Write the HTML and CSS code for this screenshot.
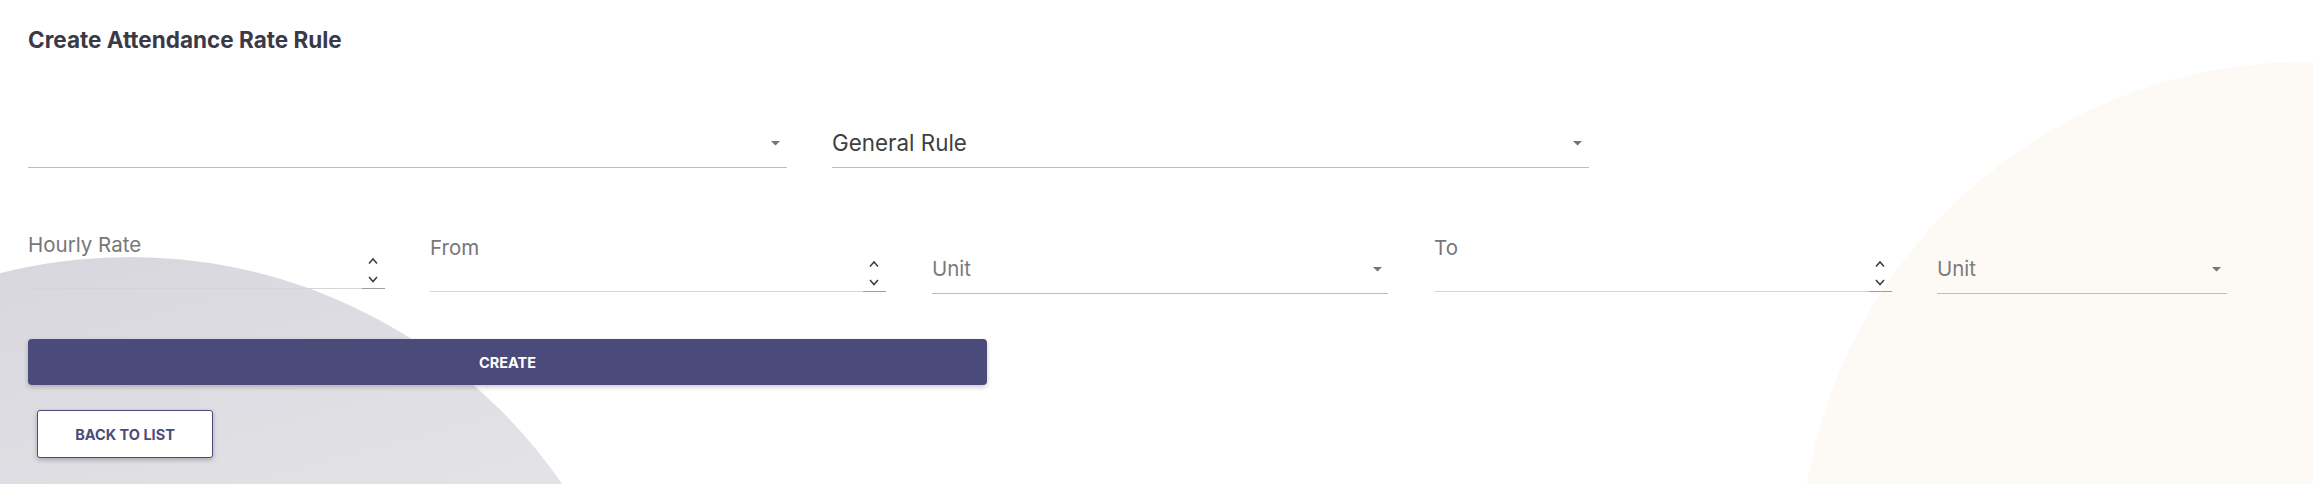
FILE: index.html
```html
<!DOCTYPE html>
<html lang="en">
<head>
<meta charset="utf-8">
<title>Create Attendance Rate Rule</title>
<link rel="stylesheet" href="styles.css">
</head>
<body>
<div class="page">
  <div class="blob blob-left"></div>
  <div class="blob blob-right"></div>
  <main class="content">
    <h1 class="title">Create Attendance Rate Rule</h1>

    <div class="row row-top">
      <div class="select select-lg w-first">
        <span class="select-value"></span>
        <svg class="caret" width="9" height="5" viewBox="0 0 9 5"><polygon points="0,0 9,0 4.5,4.5" fill="#757575"/></svg>
      </div>
      <div class="select select-lg w-second">
        <span class="select-value">General Rule</span>
        <svg class="caret" width="9" height="5" viewBox="0 0 9 5"><polygon points="0,0 9,0 4.5,4.5" fill="#757575"/></svg>
      </div>
    </div>

    <div class="row row-fields">
      <div class="num-field w-hourly">
        <label class="num-label">Hourly Rate</label>
        <div class="num-input">
          <span class="spin">
            <svg width="10" height="26" viewBox="0 0 10 26"><path d="M1 6.5 L5 2 L9 6.5" fill="none" stroke="#3a3a3a" stroke-width="1.5"/><path d="M1 20 L5 24.5 L9 20" fill="none" stroke="#3a3a3a" stroke-width="1.5"/></svg>
          </span>
        </div>
      </div>
      <div class="num-field w-from shift-3">
        <label class="num-label">From</label>
        <div class="num-input">
          <span class="spin">
            <svg width="10" height="26" viewBox="0 0 10 26"><path d="M1 6.5 L5 2 L9 6.5" fill="none" stroke="#3a3a3a" stroke-width="1.5"/><path d="M1 20 L5 24.5 L9 20" fill="none" stroke="#3a3a3a" stroke-width="1.5"/></svg>
          </span>
        </div>
      </div>
      <div class="select select-sm w-unit shift-20">
        <span class="select-value placeholder">Unit</span>
        <svg class="caret" width="9" height="5" viewBox="0 0 9 5"><polygon points="0,0 9,0 4.5,4.5" fill="#757575"/></svg>
      </div>
      <div class="num-field w-to shift-3">
        <label class="num-label">To</label>
        <div class="num-input">
          <span class="spin">
            <svg width="10" height="26" viewBox="0 0 10 26"><path d="M1 6.5 L5 2 L9 6.5" fill="none" stroke="#3a3a3a" stroke-width="1.5"/><path d="M1 20 L5 24.5 L9 20" fill="none" stroke="#3a3a3a" stroke-width="1.5"/></svg>
          </span>
        </div>
      </div>
      <div class="select select-sm w-unit2 shift-20">
        <span class="select-value placeholder">Unit</span>
        <svg class="caret" width="9" height="5" viewBox="0 0 9 5"><polygon points="0,0 9,0 4.5,4.5" fill="#757575"/></svg>
      </div>
    </div>

    <button class="btn-create" type="button">CREATE</button>
    <button class="btn-back" type="button">BACK TO LIST</button>
  </main>
</div>
</body>
</html>
```

FILE: styles.css
```css
html, body {
  margin: 0;
  padding: 0;
  height: 100%;
}

body {
  font-family: Inter, Roboto, "Liberation Sans", Arial, sans-serif;
  background: #ffffff;
  overflow: hidden;
}

.page {
  position: relative;
  min-height: 484px;
  overflow: hidden;
}

.blob {
  position: absolute;
  border-radius: 50%;
  z-index: 0;
}

.blob-left {
  left: -395px;
  top: 257px;
  width: 1050px;
  height: 1050px;
  background: linear-gradient(165deg, #d4d3dc 0%, #dcdbe1 18%, #e5e4e8 40%);
}

.blob-right {
  left: 1800px;
  top: 62px;
  width: 1010px;
  height: 1010px;
  background: #fdfaf6;
}

.content {
  position: relative;
  z-index: 1;
  padding: 27px 0 0 28px;
}

.title {
  margin: 0;
  font-size: 22.5px;
  line-height: 25px;
  font-weight: 700;
  color: #3a3947;
}

.row {
  display: flex;
  align-items: flex-start;
}

.row-top {
  margin-top: 75px;
  gap: 45px;
}

.row-fields {
  margin-top: 65px;
}

/* select-like fields */
.select {
  display: flex;
  align-items: center;
  height: 32px;
  padding-bottom: 8px;
  border-bottom: 1px solid #bdbdbd;
}

.select-value {
  flex: 1;
  line-height: 32px;
  white-space: nowrap;
  color: #3f3f3f;
}

.select-lg .select-value {
  font-size: 22.4px;
}

.select-sm .select-value {
  font-size: 20.5px;
}

.placeholder {
  color: #7c7c7c;
}

.caret {
  flex: none;
  margin-right: 7px;
}

.select-sm .caret {
  margin-right: 6px;
}

.w-first { width: 759px; }
.w-second { width: 757px; }

/* number fields */
.num-field {
  display: flex;
  flex-direction: column;
}

.num-label {
  height: 24px;
  font-size: 20.5px;
  line-height: 24px;
  color: #777777;
  white-space: nowrap;
}

.num-input {
  height: 31px;
  display: flex;
  justify-content: flex-end;
  border-bottom: 1px solid #d5d5d9;
}

.spin {
  width: 23px;
  height: 31px;
  margin-bottom: -1px;
  border-bottom: 1px solid #9e9e9e;
  display: flex;
  justify-content: center;
  align-items: flex-start;
}

.spin svg {
  display: block;
  margin-right: 2px;
}

.w-hourly { width: 357px; }
.w-from { width: 456px; margin-left: 45px; }
.w-unit { width: 456px; margin-left: 46px; }
.w-to { width: 458px; margin-left: 46px; }
.w-unit2 { width: 290px; margin-left: 45px; }

.shift-3 { margin-top: 3px; }
.shift-20 { margin-top: 20px; }

/* buttons */
.btn-create {
  display: block;
  margin-top: 45px;
  width: 959px;
  height: 46px;
  border: none;
  border-radius: 4px;
  background: #4b4b7b;
  color: #ffffff;
  font-family: Inter, Roboto, "Liberation Sans", Arial, sans-serif;
  font-size: 14.5px;
  font-weight: 700;
  box-shadow: 0 2px 5px rgba(0, 0, 0, 0.22);
  cursor: pointer;
}

.btn-back {
  display: block;
  margin-top: 25px;
  margin-left: 9px;
  width: 176px;
  height: 48px;
  border: 1px solid #4b4b7b;
  border-radius: 3px;
  background: #ffffff;
  color: #4b4b7b;
  font-family: Inter, Roboto, "Liberation Sans", Arial, sans-serif;
  font-size: 14.5px;
  font-weight: 700;
  box-shadow: 0 2px 5px rgba(0, 0, 0, 0.25);
  cursor: pointer;
}
```
